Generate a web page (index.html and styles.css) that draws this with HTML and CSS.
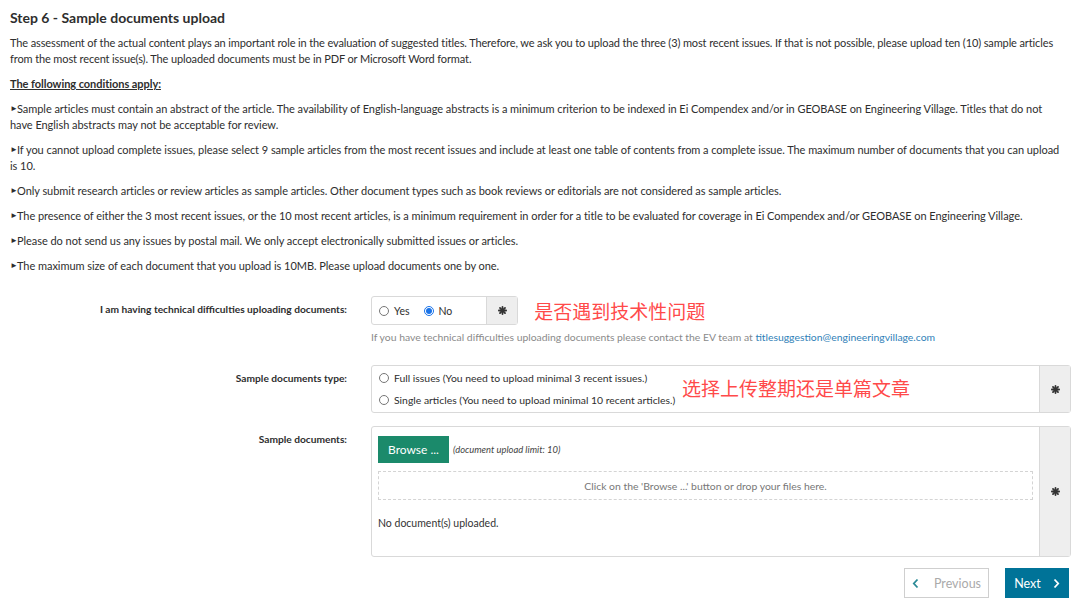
FILE: index.html
```html
<!DOCTYPE html>
<html lang="en">
<head>
    <meta charset="UTF-8">
    <title>Step 6 - Sample documents upload</title>
    <link rel="stylesheet" href="styles.css">
</head>
<body>
    <div class="page">
        <h2 class="step-title">Step 6 - Sample documents upload</h2>
        <p class="intro">The assessment of the actual content plays an important role in the evaluation of suggested titles. Therefore, we ask you to upload the three (3) most recent issues. If that is not possible, please upload ten (10) sample articles from the most recent issue(s). The uploaded documents must be in PDF or Microsoft Word format.</p>
        <p class="conditions">The following conditions apply:</p>
        <p class="bullet">Sample articles must contain an abstract of the article. The availability of English-language abstracts is a minimum criterion to be indexed in Ei Compendex and/or in GEOBASE on Engineering Village. Titles that do not have English abstracts may not be acceptable for review.</p>
        <p class="bullet">If you cannot upload complete issues, please select 9 sample articles from the most recent issues and include at least one table of contents from a complete issue. The maximum number of documents that you can upload is 10.</p>
        <p class="bullet">Only submit research articles or review articles as sample articles. Other document types such as book reviews or editorials are not considered as sample articles.</p>
        <p class="bullet">The presence of either the 3 most recent issues, or the 10 most recent articles, is a minimum requirement in order for a title to be evaluated for coverage in Ei Compendex and/or GEOBASE on Engineering Village.</p>
        <p class="bullet">Please do not send us any issues by postal mail. We only accept electronically submitted issues or articles.</p>
        <p class="bullet">The maximum size of each document that you upload is 10MB. Please upload documents one by one.</p>

        <form class="form">
            <div class="row row-tech">
                <label class="row-label">I am having technical difficulties uploading documents:</label>
                <div class="row-field">
                    <div class="field-line">
                        <div class="input-group">
                            <div class="group-body radios-inline">
                                <label class="radio"><input type="radio" name="tech"> Yes</label>
                                <label class="radio"><input type="radio" name="tech" checked> No</label>
                            </div>
                            <div class="addon">
                                <svg width="9" height="9" viewBox="0 0 10 10"><g stroke="#333" stroke-width="2" stroke-linecap="round"><line x1="5" y1="1" x2="5" y2="9"/><line x1="1" y1="5" x2="9" y2="5"/><line x1="2.2" y1="2.2" x2="7.8" y2="7.8"/><line x1="7.8" y1="2.2" x2="2.2" y2="7.8"/></g></svg>
                            </div>
                        </div>
                        <span class="note note-tech">是否遇到技术性问题</span>
                    </div>
                    <div class="help">If you have technical difficulties uploading documents please contact the EV team at <a href="#">titlesuggestion@engineeringvillage.com</a></div>
                </div>
            </div>

            <div class="row row-type">
                <label class="row-label">Sample documents type:</label>
                <div class="row-field">
                    <div class="input-group wide">
                        <div class="group-body radios-stacked">
                            <label class="radio"><input type="radio" name="type"> Full issues (You need to upload minimal 3 recent issues.)</label>
                            <label class="radio"><input type="radio" name="type"> Single articles (You need to upload minimal 10 recent articles.)</label>
                            <span class="note note-type">选择上传整期还是单篇文章</span>
                        </div>
                        <div class="addon">
                            <svg width="9" height="9" viewBox="0 0 10 10"><g stroke="#333" stroke-width="2" stroke-linecap="round"><line x1="5" y1="1" x2="5" y2="9"/><line x1="1" y1="5" x2="9" y2="5"/><line x1="2.2" y1="2.2" x2="7.8" y2="7.8"/><line x1="7.8" y1="2.2" x2="2.2" y2="7.8"/></g></svg>
                        </div>
                    </div>
                </div>
            </div>

            <div class="row row-docs">
                <label class="row-label">Sample documents:</label>
                <div class="row-field">
                    <div class="input-group wide">
                        <div class="group-body upload">
                            <div class="upload-top">
                                <button type="button" class="browse">Browse ...</button>
                                <span class="limit">(document upload limit: 10)</span>
                            </div>
                            <div class="dropzone">Click on the 'Browse ...' button or drop your files here.</div>
                            <div class="uploaded">No document(s) uploaded.</div>
                        </div>
                        <div class="addon">
                            <svg width="9" height="9" viewBox="0 0 10 10"><g stroke="#333" stroke-width="2" stroke-linecap="round"><line x1="5" y1="1" x2="5" y2="9"/><line x1="1" y1="5" x2="9" y2="5"/><line x1="2.2" y1="2.2" x2="7.8" y2="7.8"/><line x1="7.8" y1="2.2" x2="2.2" y2="7.8"/></g></svg>
                        </div>
                    </div>
                </div>
            </div>

            <div class="nav">
                <button type="button" class="btn-prev">
                    <svg width="7" height="11" viewBox="0 0 7 11"><polyline points="5.5,1.5 1.8,5.5 5.5,9.5" fill="none" stroke="#2a8a96" stroke-width="1.8"/></svg>
                    Previous
                </button>
                <button type="button" class="btn-next">
                    Next
                    <svg width="7" height="11" viewBox="0 0 7 11"><polyline points="1.5,1.5 5.2,5.5 1.5,9.5" fill="none" stroke="#fff" stroke-width="1.8"/></svg>
                </button>
            </div>
        </form>
    </div>
</body>
</html>
```

FILE: styles.css
```css
body {
    margin: 0;
    background: #fff;
    color: #2e2e2e;
    font-family: Lato, "Open Sans", sans-serif;
    font-size: 11px;
}
.page {
    padding: 9px 11px 0 10px;
}
.step-title {
    font-size: 14px;
    font-weight: bold;
    margin: 0 0 8px;
    line-height: 18px;
}
p {
    margin: 0 0 9px;
    max-width: 1055px;
    line-height: 16px;
    letter-spacing: -0.05px;
}
p.intro {
    letter-spacing: -0.12px;
}
.bullet::before {
    content: "\25BA";
    display: inline-block;
    width: 7px;
    font-size: 8px;
    line-height: 8px;
    vertical-align: 1px;
    overflow: hidden;
}
.conditions {
    font-weight: bold;
    text-decoration: underline;
}
.form {
    margin-top: 22px;
}
.row {
    display: grid;
    grid-template-columns: 337px 1fr;
    column-gap: 24px;
}
.row-label {
    text-align: right;
    font-weight: bold;
    font-size: 10.2px;
    padding-top: 5px;
    line-height: 16px;
}
.row-tech {
    margin-bottom: 22px;
}
.row-type {
    margin-bottom: 13px;
}
.field-line {
    display: flex;
    align-items: center;
    gap: 16px;
}
.input-group {
    display: flex;
    border: 1px solid #d9d9d9;
    border-radius: 3px;
    background: #fff;
}
.input-group.wide {
    width: 100%;
}
.group-body {
    flex: 1;
}
.addon {
    width: 30px;
    background: #eee;
    border-left: 1px solid #d9d9d9;
    display: flex;
    align-items: center;
    justify-content: center;
}
.radios-inline {
    display: flex;
    align-items: center;
    gap: 14px;
    padding: 7px 34px 7px 7px;
    height: 13px;
    font-size: 10.5px;
}
.radios-stacked {
    position: relative;
    padding: 1px 6px 1px 7px;
    font-size: 10.4px;
}
.radios-stacked .radio {
    line-height: 22px;
}
.radio {
    display: flex;
    align-items: center;
    gap: 5px;
}
.radio input {
    margin: 0;
    width: 10px;
    height: 10px;
    accent-color: #1a73e8;
}
.note {
    color: #ff4a4a;
    font-family: "Noto Sans CJK SC", sans-serif;
    font-size: 19px;
    line-height: 22px;
}
.note-type {
    position: absolute;
    left: 310px;
    top: 11px;
}
.help {
    color: #8a8a8a;
    font-size: 10.4px;
    margin-top: 6px;
}
.help a {
    color: #2f7fb8;
    text-decoration: none;
}
.upload {
    padding: 9px 6px 0 6px;
    height: 120px;
}
.upload-top {
    display: flex;
    align-items: center;
    gap: 4px;
}
.browse {
    background: #1b8a6b;
    color: #fff;
    border: none;
    font-family: inherit;
    font-size: 12px;
    height: 27px;
    width: 71px;
    padding: 0;
}
.limit {
    font-style: italic;
    font-size: 9.4px;
    color: #444;
}
.dropzone {
    margin-top: 8px;
    height: 27px;
    border: 1px dashed #d4d4d4;
    display: flex;
    align-items: center;
    justify-content: center;
    color: #777;
    font-size: 10.4px;
}
.uploaded {
    margin-top: 17px;
    font-size: 10.5px;
    color: #333;
}
.nav {
    display: flex;
    justify-content: flex-end;
    gap: 16px;
    margin-top: 11px;
}
.nav button {
    height: 30px;
    font-family: inherit;
    font-size: 12.5px;
    padding: 0;
    display: flex;
    align-items: center;
    justify-content: center;
}
.btn-prev {
    width: 85px;
    background: #fff;
    border: 1px solid #cfcfcf;
    color: #aaa;
    gap: 15px;
}
.btn-next {
    width: 64px;
    background: #007398;
    border: none;
    color: #fff;
    gap: 12px;
}
```
